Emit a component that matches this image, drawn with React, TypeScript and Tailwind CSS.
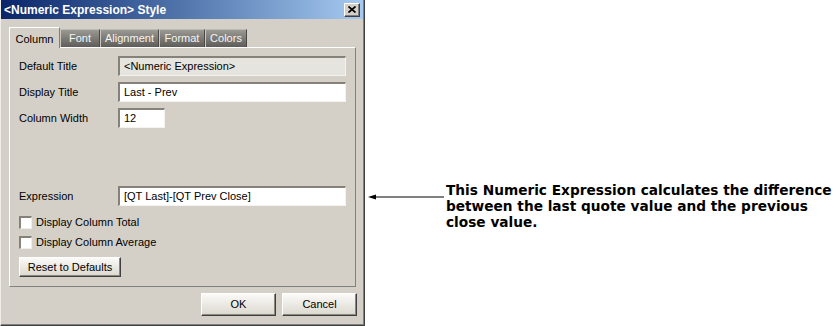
import React from "react";

function Field({ w, value, gray }: { w: string; value: string; gray?: boolean }) {
  return (
    <div
      className={`${w} h-[20px] flex items-center pl-[4px] border-t-2 border-l-2 border-r border-b border-t-[#85827a] border-l-[#85827a] border-r-[#f4f3ef] border-b-[#f4f3ef] ${gray ? "bg-[#e6e4df]" : "bg-white"} text-black whitespace-nowrap overflow-hidden`}
    >
      {value}
    </div>
  );
}

function Row({ label, children, cls }: { label: string; children: React.ReactNode; cls: string }) {
  return (
    <div className={`flex items-center h-[20px] ${cls}`}>
      <div className="w-[99px] shrink-0">{label}</div>
      {children}
    </div>
  );
}

function Check({ label, cls }: { label: string; cls: string }) {
  return (
    <div className={`flex items-center h-[13px] ${cls}`}>
      <div className="w-[13px] h-[13px] bg-white border-t-2 border-l-2 border-r border-b border-t-[#85827a] border-l-[#85827a] border-r-[#efede8] border-b-[#efede8] shrink-0" />
      <span className="ml-[4px]">{label}</span>
    </div>
  );
}

function Btn({ label, cls }: { label: string; cls: string }) {
  return (
    <div
      className={`${cls} flex items-center justify-center bg-linear-to-b from-[#fbfaf8] to-[#dcd8cf] border border-t-white border-l-white border-r-[#404040] border-b-[#404040] shadow-[inset_-1px_-1px_#8a877f]`}
    >
      {label}
    </div>
  );
}

function Tab({ label, w, active }: { label: string; w: string; active?: boolean }) {
  if (active) {
    return (
      <div
        className={`${w} h-[21px] -mb-px relative z-10 bg-[#d4d0c8] border-t border-l border-t-white border-l-white border-r border-r-[#808080] flex items-start justify-center pt-[3px] text-black`}
      >
        {label}
      </div>
    );
  }
  return (
    <div
      className={`${w} h-[18px] bg-linear-to-b from-[#9b9993] to-[#5e5d59] border-t border-l border-t-[#bcbab3] border-l-[#c9c7c0] border-r border-r-[#4a4946] flex items-center justify-center text-[#f5f5f5]`}
    >
      {label}
    </div>
  );
}

export default function App() {
  return (
    <div className="w-[834px] h-[326px] bg-white flex overflow-hidden font-['Liberation_Sans',Arial,sans-serif] text-[11px] text-black">
      {/* Dialog */}
      <div className="w-[365px] h-[326px] shrink-0 border-l border-l-[#f0eee9] border-r border-b border-r-[#404040] border-b-[#404040]">
        <div className="w-full h-full bg-[#d4d0c8] border-r border-b border-r-[#808080] border-b-[#808080] flex flex-col">
          {/* Title bar */}
          <div className="h-[19px] shrink-0 bg-linear-to-r from-[#0a246a] to-[#a6caf0] flex items-center justify-between">
            <span className="pl-[3px] text-white font-bold text-[12px] leading-none">&lt;Numeric Expression&gt; Style</span>
            <div className="mr-[3px] w-[16px] h-[14px] bg-[#d4d0c8] border border-t-white border-l-white border-r-[#404040] border-b-[#404040] shadow-[inset_-1px_-1px_#808080] flex items-center justify-center">
              <svg width="8" height="7" viewBox="0 0 8 7">
                <path d="M0.5 0.5 L7.5 6.5 M7.5 0.5 L0.5 6.5" stroke="#000" strokeWidth="1.7" />
              </svg>
            </div>
          </div>

          {/* Tabs */}
          <div className="mt-[8px] ml-[8px] flex items-end">
            <Tab label="Column" w="w-[51px]" active />
            <Tab label="Font" w="w-[40px]" />
            <Tab label="Alignment" w="w-[59px]" />
            <Tab label="Format" w="w-[46px]" />
            <Tab label="Colors" w="w-[42px]" />
          </div>

          {/* Panel */}
          <div className="ml-[8px] w-[347px] h-[240px] shrink-0 border-t border-l border-t-white border-l-white border-r border-b border-r-[#808080] border-b-[#808080] pl-[9px] flex flex-col">
            <Row label="Default Title" cls="mt-[8px]">
              <Field w="w-[228px]" value="<Numeric Expression>" gray />
            </Row>
            <Row label="Display Title" cls="mt-[6px]">
              <Field w="w-[228px]" value="Last - Prev" />
            </Row>
            <Row label="Column Width" cls="mt-[6px]">
              <Field w="w-[47px]" value="12" />
            </Row>
            <Row label="Expression" cls="mt-[58px]">
              <Field w="w-[228px]" value="[QT Last]-[QT Prev Close]" />
            </Row>
            <Check label="Display Column Total" cls="mt-[10px]" />
            <Check label="Display Column Average" cls="mt-[7px]" />
            <Btn label="Reset to Defaults" cls="mt-[8px] w-[102px] h-[20px]" />
          </div>

          {/* Bottom buttons */}
          <div className="mt-[6px] mr-[6px] flex justify-end gap-[6px]">
            <Btn label="OK" cls="w-[75px] h-[23px]" />
            <Btn label="Cancel" cls="w-[75px] h-[23px]" />
          </div>
        </div>
      </div>

      {/* Annotation */}
      <div className="pt-[182px] flex items-start">
        <svg width="76" height="8" viewBox="0 0 76 8" className="mt-[11px] ml-[3px] shrink-0">
          <path d="M0 4 L8 1.5 L8 6.5 Z" fill="#000" />
          <line x1="6" y1="4" x2="76" y2="4" stroke="#000" strokeWidth="1" />
        </svg>
        <div className="ml-[2px] font-['DejaVu_Sans',Verdana,sans-serif] font-bold text-[13.7px] leading-[16px] whitespace-nowrap text-black">
          This Numeric Expression calculates the difference
          <br />
          between the last quote value and the previous
          <br />
          close value.
        </div>
      </div>
    </div>
  );
}
